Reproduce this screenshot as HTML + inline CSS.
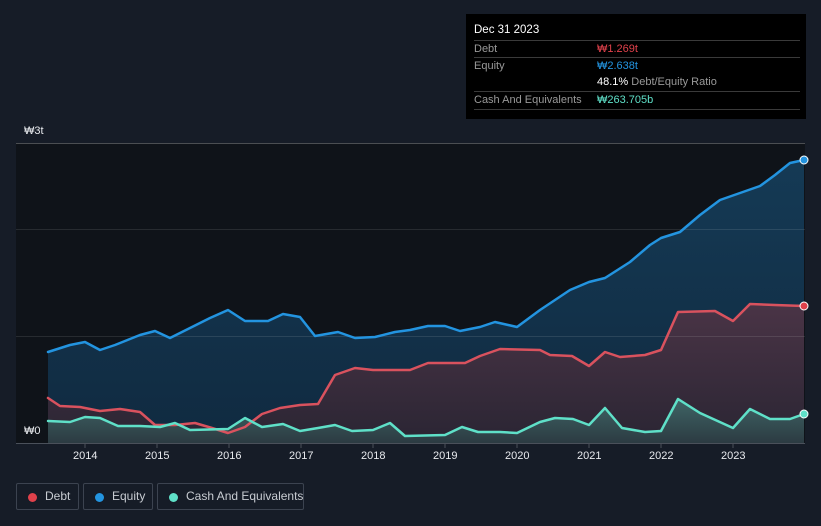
<!DOCTYPE html><html><head><style>
body{margin:0;width:821px;height:526px;background:#161c27;font-family:"Liberation Sans",sans-serif;overflow:hidden;position:relative}
.tt{position:absolute;left:466px;top:14px;width:340px;height:105px;background:#000;color:#fff;font-size:11px}
.row{position:absolute;left:8px;width:326px;border-top:1px solid #3a3a3a;height:17px;line-height:17px}
.row span{position:absolute;left:123px}
.lg{position:absolute;top:483px;height:27px;border:1px solid #3c4350;border-radius:2px;color:#c8ccd2;font-size:12px;line-height:25px;box-sizing:border-box;white-space:nowrap}
.lg i{position:absolute;left:11px;top:9px;width:9px;height:9px;border-radius:50%}
.yr{position:absolute;top:450px;color:#e8eaee;font-size:11px}
</style></head><body>
<svg width="821" height="526" style="position:absolute;left:0;top:0">
<defs>
<linearGradient id="eg" x1="0" y1="0" x2="0" y2="1"><stop offset="0" stop-color="#153a55"/><stop offset="1" stop-color="#102a40"/></linearGradient>
<linearGradient id="dg" x1="0" y1="0" x2="0" y2="1"><stop offset="0" stop-color="#4a3446"/><stop offset="1" stop-color="#2a2533"/></linearGradient>
<linearGradient id="cg" x1="0" y1="0" x2="0" y2="1"><stop offset="0" stop-color="#3f6566"/><stop offset="1" stop-color="#2c3b42"/></linearGradient>
</defs>
<rect x="16" y="143" width="789" height="300" fill="#0f1319"/>
<polygon fill="url(#eg)" points="48,443 48,352 70,345 85,342 100,350 115,345 140,335 155,331 170,338 190,328 210,318 228,310 245,321 268,321 283,314 300,317 315,336 338,332 355,338 375,337 395,332 410,330 428,326 445,326 460,331 480,327 495,322 517,327 540,310 570,290 589,282 605,278 630,262 650,245 661,238 680,232 700,215 720,200 740,193 760,186 775,175 790,163 804,160 804,443"/>
<polygon fill="url(#dg)" points="48,443 48,398 60,406 80,407 100,411 120,409 140,412 155,425 175,425 195,423 212,428 228,433 245,427 262,414 280,408 300,405 318,404 335,375 355,368 373,370 410,370 428,363 465,363 480,356 500,349 540,350 550,355 572,356 589,366 605,352 620,357 645,355 661,350 678,312 715,311 733,321 750,304 775,305 804,306 804,443"/>
<polygon fill="url(#cg)" points="48,443 48,421 70,422 85,417 100,418 118,426 140,426 160,427 175,423 190,430 228,429 245,418 262,427 283,424 300,431 318,428 335,425 352,431 373,430 390,423 405,436 445,435 462,427 478,432 500,432 517,433 540,422 555,418 573,419 589,425 605,408 622,428 645,432 661,431 678,399 700,413 733,428 750,409 770,419 790,419 804,414 804,443"/>
<g stroke="#ffffff" stroke-opacity=".1" stroke-width="1"><line x1="16" y1="143.5" x2="805" y2="143.5" stroke-opacity=".25"/><line x1="16" y1="229.5" x2="805" y2="229.5"/><line x1="16" y1="336.5" x2="805" y2="336.5"/></g>
<line x1="16" y1="443.5" x2="805" y2="443.5" stroke="#4a505a"/>
<g stroke="#4a505a"><line x1="85" y1="443" x2="85" y2="448"/><line x1="157" y1="443" x2="157" y2="448"/><line x1="229" y1="443" x2="229" y2="448"/><line x1="301" y1="443" x2="301" y2="448"/><line x1="373" y1="443" x2="373" y2="448"/><line x1="445" y1="443" x2="445" y2="448"/><line x1="517" y1="443" x2="517" y2="448"/><line x1="589" y1="443" x2="589" y2="448"/><line x1="661" y1="443" x2="661" y2="448"/><line x1="733" y1="443" x2="733" y2="448"/></g>
<g fill="none" stroke-width="2.5" stroke-linejoin="round" stroke-linecap="round">
<polyline stroke="#2394e0" points="48,352 70,345 85,342 100,350 115,345 140,335 155,331 170,338 190,328 210,318 228,310 245,321 268,321 283,314 300,317 315,336 338,332 355,338 375,337 395,332 410,330 428,326 445,326 460,331 480,327 495,322 517,327 540,310 570,290 589,282 605,278 630,262 650,245 661,238 680,232 700,215 720,200 740,193 760,186 775,175 790,163 804,160"/>
<polyline stroke="#d9525e" points="48,398 60,406 80,407 100,411 120,409 140,412 155,425 175,425 195,423 212,428 228,433 245,427 262,414 280,408 300,405 318,404 335,375 355,368 373,370 410,370 428,363 465,363 480,356 500,349 540,350 550,355 572,356 589,366 605,352 620,357 645,355 661,350 678,312 715,311 733,321 750,304 775,305 804,306"/>
<polyline stroke="#5fe0c8" points="48,421 70,422 85,417 100,418 118,426 140,426 160,427 175,423 190,430 228,429 245,418 262,427 283,424 300,431 318,428 335,425 352,431 373,430 390,423 405,436 445,435 462,427 478,432 500,432 517,433 540,422 555,418 573,419 589,425 605,408 622,428 645,432 661,431 678,399 700,413 733,428 750,409 770,419 790,419 804,414"/>
</g>
<circle cx="804" cy="160" r="4" fill="#2394e0" stroke="#fff"/>
<circle cx="804" cy="306" r="4" fill="#e0414b" stroke="#fff"/>
<circle cx="804" cy="414" r="4" fill="#5fe0c8" stroke="#fff"/>
</svg>
<div style="position:absolute;left:24px;top:125px;color:#e8eaee;font-size:11px">₩3t</div>
<div style="position:absolute;left:24px;top:425px;color:#e8eaee;font-size:11px">₩0</div>
<div class="yr" style="left:73px">2014</div><div class="yr" style="left:145px">2015</div><div class="yr" style="left:217px">2016</div><div class="yr" style="left:289px">2017</div><div class="yr" style="left:361px">2018</div><div class="yr" style="left:433px">2019</div><div class="yr" style="left:505px">2020</div><div class="yr" style="left:577px">2021</div><div class="yr" style="left:649px">2022</div><div class="yr" style="left:721px">2023</div>
<div class="tt">
<div style="position:absolute;left:8px;top:10px;font-size:11.5px">Dec 31 2023</div>
<div class="row" style="top:26px;color:#999">Debt<span style="color:#e0414b">₩1.269t</span></div>
<div class="row" style="top:43px;color:#999">Equity<span style="color:#2394e0">₩2.638t</span></div>
<div class="row" style="top:60px;border:0;color:#999"><span><b style="color:#fff;font-weight:normal">48.1%</b> Debt/Equity Ratio</span></div>
<div class="row" style="top:77px;color:#999">Cash And Equivalents<span style="color:#5fe0c8">₩263.705b</span></div>
<div style="position:absolute;left:8px;top:95px;width:326px;border-top:1px solid #3a3a3a"></div>
</div>
<div class="lg" style="left:16px;width:63px"><i style="background:#e0414b"></i><span style="position:absolute;left:28px">Debt</span></div>
<div class="lg" style="left:83px;width:70px"><i style="background:#2394e0"></i><span style="position:absolute;left:28px">Equity</span></div>
<div class="lg" style="left:157px;width:147px"><i style="background:#5fe0c8"></i><span style="position:absolute;left:28px">Cash And Equivalents</span></div>
</body></html>
